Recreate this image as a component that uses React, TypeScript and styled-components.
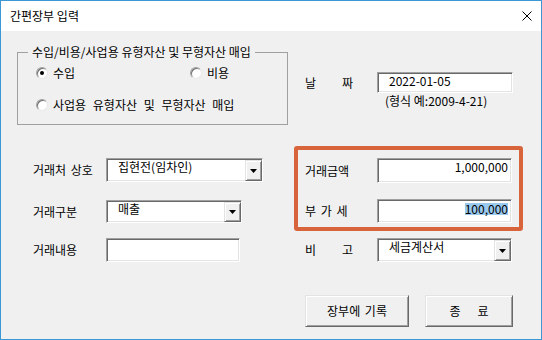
import React from 'react';
import styled, { createGlobalStyle } from 'styled-components';

const Global = createGlobalStyle`
  html, body { margin: 0; padding: 0; background: #ffffff; }
  body {
    font-family: "Noto Sans CJK KR", "Noto Sans", sans-serif;
    font-size: 12px;
    color: #000;
  }
  * { box-sizing: border-box; }
`;

const Window = styled.div`
  width: 542px;
  height: 340px;
  border: 1px solid #3c97d5;
  display: flex;
  flex-direction: column;
  background: #f0f0f0;
`;

const TitleBar = styled.div`
  height: 30px;
  flex: none;
  background: #ffffff;
  display: flex;
  align-items: center;
  justify-content: space-between;
  padding: 0 9px;
  font-size: 12px;
  line-height: 16px;
`;

const Body = styled.div`
  flex: 1;
  display: flex;
  padding-left: 16px;
  gap: 6px;
`;

const LeftCol = styled.div`
  width: 271px;
  display: flex;
  flex-direction: column;
  padding-top: 13px;
`;

const RightCol = styled.div`
  width: 229px;
  display: flex;
  flex-direction: column;
  padding-top: 41px;
`;

const Group = styled.fieldset`
  margin: 0;
  padding: 0 0 11px 0;
  border: 1px solid #a0a0a0;
  min-width: 0;
  width: 271px;
`;

const GroupTitle = styled.legend`
  margin-left: 10px;
  padding: 0 4px;
  line-height: 16px;
  font-size: 12px;
`;

const RadioRow = styled.div<{ $mt: number }>`
  display: flex;
  margin-top: ${p => p.$mt}px;
  padding-left: 18px;
  height: 16px;
  align-items: center;
`;

const RadioOption = styled.label<{ $w?: number }>`
  display: flex;
  align-items: center;
  gap: 5px;
  line-height: 16px;
  white-space: nowrap;
  word-spacing: 4px;
  flex: none;
  width: ${p => (p.$w ? `${p.$w}px` : 'auto')};
`;

const RadioDot = styled.span<{ $checked?: boolean }>`
  width: 12px;
  height: 12px;
  flex: none;
  border-radius: 50%;
  background: #ffffff;
  border: 1px solid;
  border-color: #a0a0a0 #e8e8e8 #e8e8e8 #a0a0a0;
  box-shadow: inset 1px 1px 0 #707070;
  display: flex;
  align-items: center;
  justify-content: center;
  &::after {
    content: "";
    width: 4px;
    height: 4px;
    border-radius: 50%;
    background: ${p => (p.$checked ? '#000' : 'transparent')};
  }
`;

const FormRow = styled.div<{ $mt: number; $pl: number }>`
  display: flex;
  align-items: center;
  margin-top: ${p => p.$mt}px;
  padding-left: ${p => p.$pl}px;
`;

const Label = styled.span<{ $w: number }>`
  width: ${p => p.$w}px;
  flex: none;
  line-height: 16px;
  white-space: pre;
  word-spacing: 2px;
`;

const SpacedLabel = styled.span<{ $w: number; $gap: number }>`
  width: ${p => p.$w}px;
  flex: none;
  display: flex;
  gap: ${p => p.$gap}px;
  line-height: 16px;
`;

const Field = styled.div<{ $w: number; $h: number; $right?: boolean; $combo?: boolean }>`
  width: ${p => p.$w}px;
  height: ${p => p.$h}px;
  flex: none;
  background: #ffffff;
  border: 1px solid;
  border-color: #a0a0a0 #ffffff #ffffff #a0a0a0;
  box-shadow: inset 1px 1px 0 #696969, inset -1px -1px 0 #e3e3e3;
  display: flex;
  align-items: flex-start;
  justify-content: ${p => (p.$right ? 'flex-end' : 'flex-start')};
  padding: 1px ${p => (p.$right ? 3 : 0)}px ${p => (p.$combo ? 0 : 1)}px 11px;
  line-height: 14px;
  font-size: 12px;
  white-space: nowrap;
`;

const FieldText = styled.span`
  flex: 1;
  line-height: 14px;
`;

const Selected = styled.span`
  display: inline-block;
  margin-top: 2px;
  background: #99c9ef;
  line-height: 12px;
  height: 12px;
`;

const DropButton = styled.span`
  width: 17px;
  align-self: stretch;
  flex: none;
  background: #f0f0f0;
  border: 1px solid;
  border-color: #e3e3e3 #696969 #696969 #e3e3e3;
  box-shadow: inset 1px 1px 0 #ffffff, inset -1px -1px 0 #a0a0a0;
  display: flex;
  align-items: center;
  justify-content: center;
`;

const Hint = styled.div`
  margin-top: 1px;
  padding-left: 91px;
  line-height: 14px;
  font-size: 12px;
  white-space: nowrap;
`;

const Highlight = styled.div`
  margin-top: 38px;
  border: 4px solid #d8643c;
  border-radius: 3px;
  padding: 8px 7px 4px 7px;
  display: flex;
  flex-direction: column;
  gap: 16px;
`;

const BoxRow = styled.div`
  display: flex;
  align-items: center;
`;

const ButtonRow = styled.div`
  display: flex;
  gap: 16px;
  margin-top: 33px;
  padding-left: 11px;
`;

const Button = styled.button<{ $w: number; $gap?: number }>`
  width: ${p => p.$w}px;
  height: 32px;
  margin: 0;
  padding: 0;
  font-family: inherit;
  font-size: 12px;
  color: #000;
  background: #f0f0f0;
  border: 1px solid;
  border-color: #e3e3e3 #696969 #696969 #e3e3e3;
  box-shadow: inset 1px 1px 0 #ffffff, inset -1px -1px 0 #a0a0a0;
  display: flex;
  align-items: center;
  justify-content: center;
  gap: ${p => p.$gap ?? 0}px;
  line-height: 16px;
  word-spacing: 2px;
`;

const Arrow = () => (
  <svg width="7" height="4" viewBox="0 0 7 4">
    <polygon points="0,0 7,0 3.5,4" fill="#000" />
  </svg>
);

const Combo = ({ w, h, text }: { w: number; h: number; text: string }) => (
  <Field $w={w} $h={h} $combo>
    <FieldText>{text}</FieldText>
    <DropButton>
      <Arrow />
    </DropButton>
  </Field>
);

export default function App() {
  return (
    <>
      <Global />
      <Window>
        <TitleBar>
          <span>간편장부 입력</span>
          <svg width="10" height="10" viewBox="0 0 10 10">
            <path d="M0.5 0.5 L9.5 9.5 M9.5 0.5 L0.5 9.5" stroke="#000" strokeWidth="1" />
          </svg>
        </TitleBar>
        <Body>
          <LeftCol>
            <Group>
              <GroupTitle>수입/비용/사업용 유형자산 및 무형자산 매입</GroupTitle>
              <RadioRow $mt={5}>
                <RadioOption $w={154}>
                  <RadioDot $checked />
                  수입
                </RadioOption>
                <RadioOption>
                  <RadioDot />
                  비용
                </RadioOption>
              </RadioRow>
              <RadioRow $mt={16}>
                <RadioOption>
                  <RadioDot />
                  사업용 유형자산 및 무형자산 매입
                </RadioOption>
              </RadioRow>
            </Group>
            <FormRow $mt={33} $pl={16}>
              <Label $w={73}>거래처 상호</Label>
              <Combo w={157} h={24} text="집현전(임차인)" />
            </FormRow>
            <FormRow $mt={18} $pl={16}>
              <Label $w={73}>거래구분</Label>
              <Combo w={136} h={23} text="매출" />
            </FormRow>
            <FormRow $mt={15} $pl={16}>
              <Label $w={73}>거래내용</Label>
              <Field $w={134} $h={24} />
            </FormRow>
          </LeftCol>
          <RightCol>
            <FormRow $mt={0} $pl={11}>
              <SpacedLabel $w={72} $gap={26}>
                <span>날</span>
                <span>짜</span>
              </SpacedLabel>
              <Field $w={136} $h={21}>
                <FieldText>2022-01-05</FieldText>
              </Field>
            </FormRow>
            <Hint>(형식 예:2009-4-21)</Hint>
            <Highlight>
              <BoxRow>
                <Label $w={72}>거래금액</Label>
                <Field $w={135} $h={25} $right>
                  <span>1,000,000</span>
                </Field>
              </BoxRow>
              <BoxRow>
                <Label $w={72}>부 가 세</Label>
                <Field $w={135} $h={24} $right>
                  <Selected>100,000</Selected>
                </Field>
              </BoxRow>
            </Highlight>
            <FormRow $mt={7} $pl={11}>
              <SpacedLabel $w={72} $gap={26}>
                <span>비</span>
                <span>고</span>
              </SpacedLabel>
              <Combo w={135} h={24} text="세금계산서" />
            </FormRow>
            <ButtonRow>
              <Button $w={104}>장부에 기록</Button>
              <Button $w={88} $gap={17}>
                <span>종</span>
                <span>료</span>
              </Button>
            </ButtonRow>
          </RightCol>
        </Body>
      </Window>
    </>
  );
}
